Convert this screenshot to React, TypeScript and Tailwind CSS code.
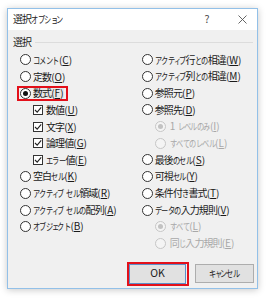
import React from "react";

type Item = {
  kind: "radio" | "check" | "subradio";
  label: string;
  key: string;
  checked?: boolean;
  disabled?: boolean;
  red?: boolean;
};

const SMALL = "ぁぃぅぇぉっゃゅょゎァィゥェォッャュョヮ";

function jp(s: string) {
  return Array.from(s).map((c, i) => {
    if (/[\u3041-\u30ff]/.test(c)) {
      if (SMALL.includes(c)) {
        return (
          <span key={i} className="inline-block origin-left scale-x-[0.76] text-[9.5px] tracking-[-3px] -mr-[1.56px]">
            {c}
          </span>
        );
      }
      return (
        <span key={i} className="inline-block origin-left scale-x-[0.76] text-[9.5px] tracking-[-1px] -mr-[2.04px]">
          {c}
        </span>
      );
    }
    if (/[\u4e00-\u9fff]/.test(c)) {
      return (
        <span key={i} className="tracking-[-0.9px]">
          {c}
        </span>
      );
    }
    return <React.Fragment key={i}>{c}</React.Fragment>;
  });
}

const left: Item[] = [
  { kind: "radio", label: "コメント", key: "C" },
  { kind: "radio", label: "定数", key: "O" },
  { kind: "radio", label: "数式", key: "F", checked: true, red: true },
  { kind: "check", label: "数値", key: "U", checked: true },
  { kind: "check", label: "文字", key: "X", checked: true },
  { kind: "check", label: "論理値", key: "G", checked: true },
  { kind: "check", label: "エラー値", key: "E", checked: true },
  { kind: "radio", label: "空白セル", key: "K" },
  { kind: "radio", label: "アクティブ セル領域", key: "R" },
  { kind: "radio", label: "アクティブ セルの配列", key: "A" },
  { kind: "radio", label: "オブジェクト", key: "B" },
];

const right: Item[] = [
  { kind: "radio", label: "アクティブ行との相違", key: "W" },
  { kind: "radio", label: "アクティブ列との相違", key: "M" },
  { kind: "radio", label: "参照元", key: "P" },
  { kind: "radio", label: "参照先", key: "D" },
  { kind: "subradio", label: "1 レベルのみ", key: "I", checked: true, disabled: true },
  { kind: "subradio", label: "すべてのレベル", key: "L", disabled: true },
  { kind: "radio", label: "最後のセル", key: "S" },
  { kind: "radio", label: "可視セル", key: "Y" },
  { kind: "radio", label: "条件付き書式", key: "T" },
  { kind: "radio", label: "データの入力規則", key: "V" },
  { kind: "subradio", label: "すべて", key: "L", checked: true, disabled: true },
  { kind: "subradio", label: "同じ入力規則", key: "E", disabled: true },
];

function Radio({ checked, disabled }: { checked?: boolean; disabled?: boolean }) {
  return (
    <span
      className={
        "flex w-[11px] h-[11px] shrink-0 items-center justify-center rounded-full border " +
        (disabled ? "border-[#c6c6c6] bg-[#f4f4f4]" : "border-[#333333] bg-white")
      }
    >
      {checked && (
        <span
          className={
            "block w-[5px] h-[5px] rounded-full " + (disabled ? "bg-[#c2c2c2]" : "bg-[#111111]")
          }
        />
      )}
    </span>
  );
}

function Check() {
  return (
    <span className="flex w-[10px] h-[10px] shrink-0 items-center justify-center border border-[#333333] bg-white">
      <svg width="8" height="8" viewBox="0 0 8 8">
        <path d="M1 4 L3.2 6.2 L7.2 1.4" fill="none" stroke="#222" strokeWidth="1.1" />
      </svg>
    </span>
  );
}

function Label({ item }: { item: Item }) {
  return (
    <span className={"whitespace-nowrap " + (item.disabled ? "text-[#a8a8a8]" : "text-[#1a1a1a]")}>
      {jp(item.label)}(<u className="underline-offset-[1px]">{item.key}</u>)
    </span>
  );
}

function Row({ item }: { item: Item }) {
  if (item.kind === "check") {
    return (
      <div className="flex h-[16.7px] items-center pl-[13px]">
        <Check />
        <span className="ml-[3px]">
          <Label item={item} />
        </span>
      </div>
    );
  }
  if (item.kind === "subradio") {
    return (
      <div className="flex h-[16.7px] items-center pl-[13.5px]">
        <Radio checked={item.checked} disabled />
        <span className="ml-[3.5px]">
          <Label item={item} />
        </span>
      </div>
    );
  }
  if (item.red) {
    return (
      <div className="flex h-[16.7px] items-center">
        <div className="-ml-[3px] flex h-[15px] items-center border-2 border-[#e3101a] pl-[1px] pr-[2px]">
          <Radio checked={item.checked} />
          <span className="ml-[2px] bg-[#e6e6e6]">
            <Label item={item} />
          </span>
        </div>
      </div>
    );
  }
  return (
    <div className="flex h-[16.7px] items-center">
      <Radio checked={item.checked} />
      <span className="ml-[2px]">
        <Label item={item} />
      </span>
    </div>
  );
}

export default function App() {
  return (
    <div className="w-[271px] h-[300px] bg-white pl-[7px] pt-[8px] font-['Noto_Sans_CJK_JP','Noto_Sans',sans-serif] text-[10px] leading-none text-[#1a1a1a]">
      <div className="flex w-[251px] h-[281px] flex-col border border-[#92c0e8] shadow-[0_1px_7px_rgba(0,0,0,0.22)]">
        <div className="flex h-[21px] items-center bg-white pl-[5px]">
          <span className="whitespace-nowrap text-[#222]">{jp("選択オプション")}</span>
          <span className="ml-auto w-[10px] text-center text-[10.5px] text-[#444]">?</span>
          <span className="ml-[25px] mr-[10px] flex w-[10px] justify-center">
            <svg width="9" height="9" viewBox="0 0 9 9">
              <path d="M0.5 0.5 L8.5 8.5 M8.5 0.5 L0.5 8.5" stroke="#555" strokeWidth="0.9" />
            </svg>
          </span>
        </div>
        <div className="flex flex-1 flex-col bg-[#f0f0f0]">
          <div className="mt-[4px] flex h-[16px] items-center pl-[5px] pr-[4px]">
            <span className="whitespace-nowrap">{jp("選択")}</span>
            <span className="ml-[4px] h-px flex-1 bg-[#dcdcdc]" />
          </div>
          <div className="mt-[1.5px] grid grid-cols-[121.7px_1fr] pl-[12px]">
            <div className="flex flex-col">
              {left.map((it, i) => (
                <Row key={i} item={it} />
              ))}
            </div>
            <div className="flex flex-col">
              {right.map((it, i) => (
                <Row key={i} item={it} />
              ))}
            </div>
          </div>
          <div className="mt-auto mb-[2.5px] flex items-center justify-end pr-[3.5px]">
            <div className="flex h-[24px] items-center border-2 border-[#e3101a] px-[0.5px]">
              <button className="flex h-[20px] w-[57px] items-center justify-center border border-[#5d8fc9] bg-[#e1e1e1] text-[10.5px] text-[#1a1a1a]">
                OK
              </button>
            </div>
            <button className="ml-[6px] flex h-[19.5px] w-[59px] items-center justify-center whitespace-nowrap border border-[#adadad] bg-[#e1e1e1] text-[10px] text-[#1a1a1a]">
              {jp("キャンセル")}
            </button>
          </div>
        </div>
      </div>
    </div>
  );
}
